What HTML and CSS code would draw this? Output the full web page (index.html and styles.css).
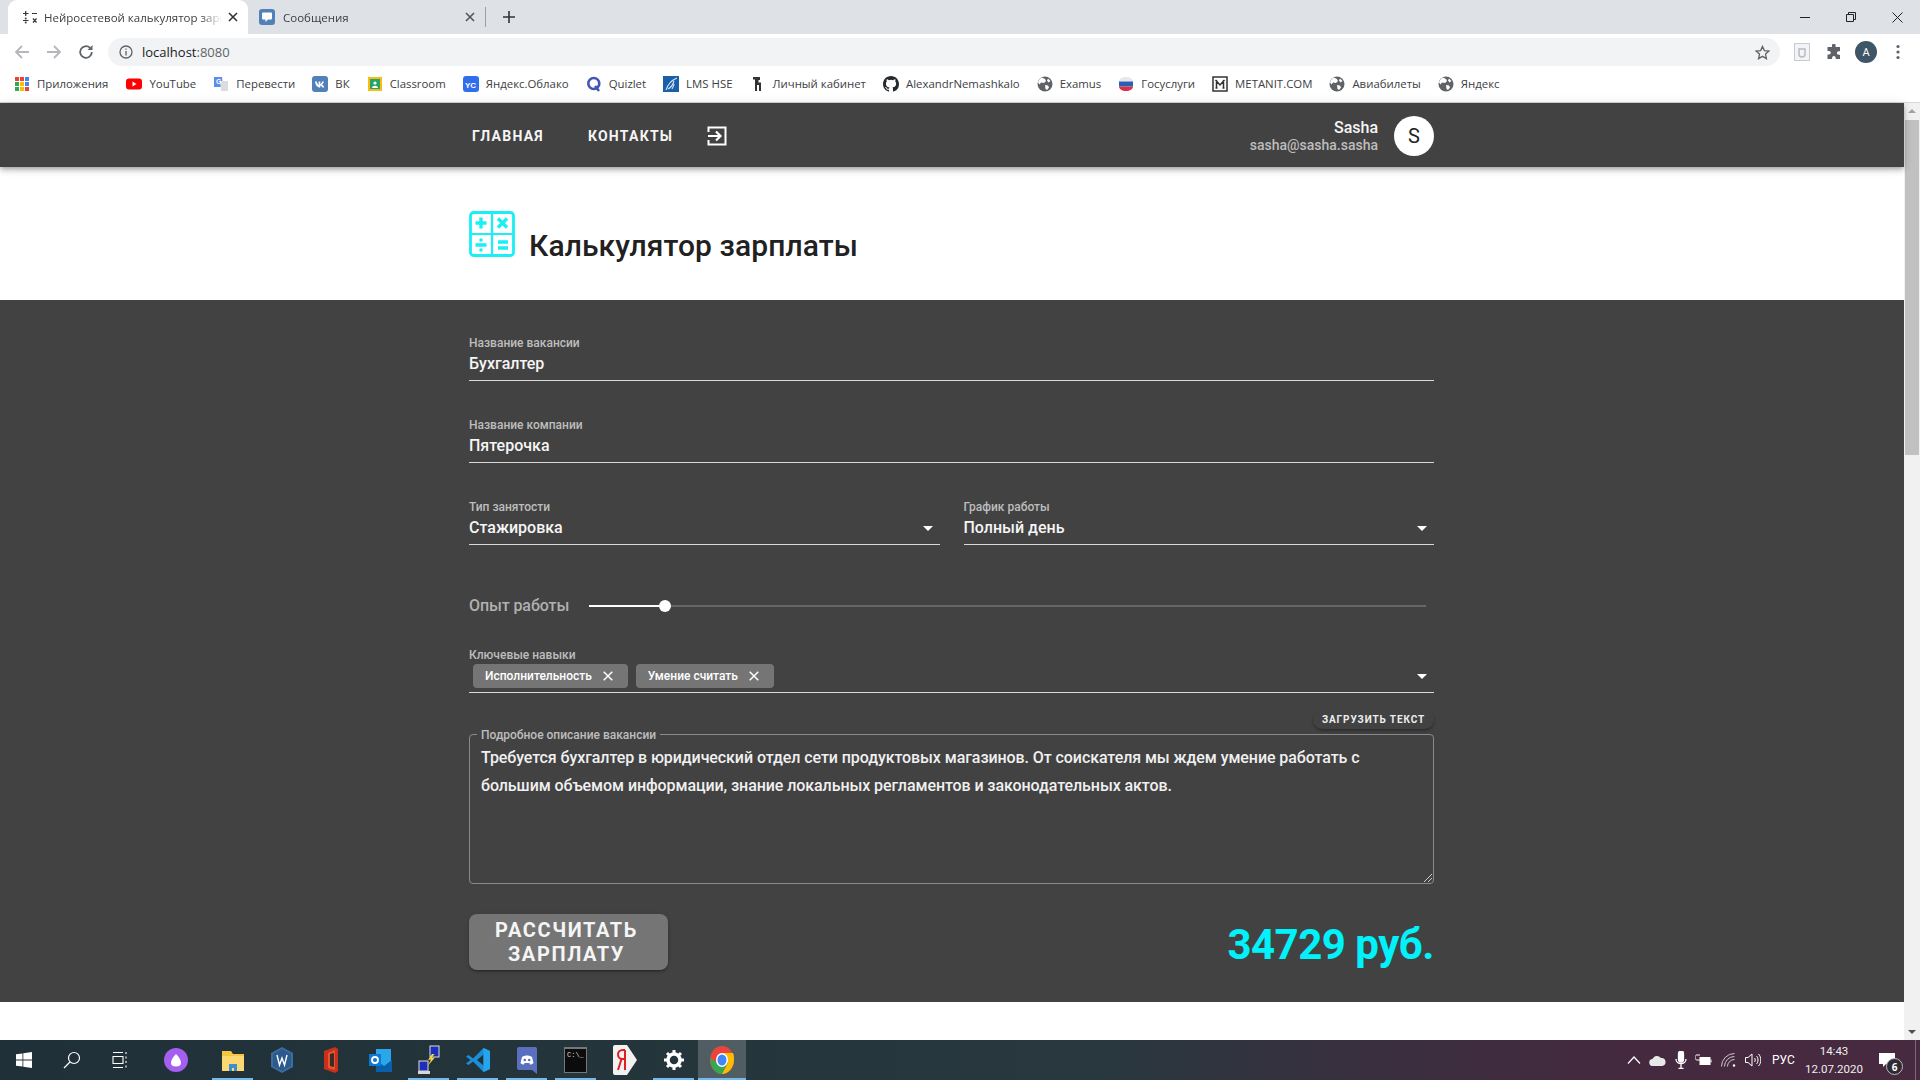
FILE: index.html
```html
<!DOCTYPE html>
<html lang="ru">
<head>
<meta charset="utf-8">
<title>Нейросетевой калькулятор зарплаты</title>
<link rel="stylesheet" href="styles.css">
</head>
<body>
<svg class="defs" width="0" height="0">
  <symbol id="globe" viewBox="0 0 16 16"><circle cx="8" cy="8" r="7.5" fill="#5f6368"/><path d="M5 1.5l3 1.5 1 2-2 2-3-.5-1.5 2-1.5-2C1.500 4 3 2.500 5 1.500zM8 9l3 .5 1 2-2 2.500-1.500-1zM11 2.500l2.500 2.500-2 1.500-1.500-2z" fill="#fff"/></symbol>
</svg>
<div class="tabstrip">
  <div class="tab tab-active">
    <svg class="tab-fav" width="16" height="16" viewBox="0 0 16 16" stroke="#333" stroke-width="1.200" fill="none"><path d="M1 4.500h5.500M3.700 2v5M10 4.500h5M1 11.500h5.500M11 9.500l3.500 4M14.500 9.500l-3.500 4"/><circle cx="3.700" cy="9.500" r=".4"/><circle cx="3.700" cy="13.500" r=".4"/></svg>
    <span class="tab-title">Нейросетевой калькулятор зарплаты</span>
    <svg class="tab-x" width="10" height="10" viewBox="0 0 10 10" stroke="#333" stroke-width="1.600"><path d="M1 1l8 8M9 1l-8 8"/></svg>
  </div>
  <div class="tab tab-other">
    <svg class="tab-fav" width="16" height="16" viewBox="0 0 16 16"><rect width="16" height="16" rx="3" fill="#5181b8"/><path d="M4 3.500h8a1 1 0 0 1 1 1v5a1 1 0 0 1-1 1H9l-2.500 2.500v-2.500H4a1 1 0 0 1-1-1v-5a1 1 0 0 1 1-1z" fill="#fff"/></svg>
    <span class="tab-title">Сообщения</span>
    <svg class="tab-x" width="10" height="10" viewBox="0 0 10 10" stroke="#555" stroke-width="1.600"><path d="M1 1l8 8M9 1l-8 8"/></svg>
  </div>
  <div class="tab-sep"></div>
  <svg class="tab-new" width="12" height="12" viewBox="0 0 12 12" stroke="#333" stroke-width="1.600"><path d="M6 0v12M0 6h12"/></svg>
  <div class="winctl">
    <svg width="10" height="10" viewBox="0 0 10 10" stroke="#222"><path d="M0 5.500h10"/></svg>
    <svg width="10" height="10" viewBox="0 0 10 10" stroke="#222" fill="none"><path d="M.500 2.500h7v7h-7zM2.500 2.500v-2h7v7h-2"/></svg>
    <svg width="11" height="11" viewBox="0 0 11 11" stroke="#222"><path d="M.500.500l10 10M10.500.500l-10 10"/></svg>
  </div>
</div>
<div class="toolbar">
  <svg class="nav-ic" width="16" height="16" viewBox="0 0 16 16" stroke="#b4b7bb" stroke-width="1.800" fill="none"><path d="M15 8H2M8 2L2 8l6 6"/></svg>
  <svg class="nav-ic" width="16" height="16" viewBox="0 0 16 16" stroke="#b4b7bb" stroke-width="1.800" fill="none"><path d="M1 8h13M8 2l6 6-6 6"/></svg>
  <svg class="nav-ic" width="16" height="16" viewBox="0 0 16 16" stroke="#5f6368" stroke-width="1.800" fill="none"><path d="M13.800 8A5.800 5.800 0 1 1 12 3.800"/><path d="M14.500 1v5h-5z" fill="#5f6368" stroke="none"/></svg>
  <div class="omnibox">
    <svg width="14" height="14" viewBox="0 0 14 14" fill="none" stroke="#5f6368" stroke-width="1.300"><circle cx="7" cy="7" r="6"/><path d="M7 6v4.500M7 3.500v1.300"/></svg>
    <span class="url">localhost<span class="url-dim">:8080</span></span>
    <svg class="star" width="15" height="15" viewBox="0 0 16 16" fill="none" stroke="#5f6368" stroke-width="1.400"><path d="M8 1.500l2 4.500 4.800.5-3.600 3.200 1 4.800L8 12.100l-4.200 2.400 1-4.800L1.200 6.500 6 6z"/></svg>
  </div>
  <div class="tool-right">
    <svg width="16" height="18" viewBox="0 0 16 18"><rect x=".5" y=".5" width="15" height="17" fill="#f3f4f6" stroke="#c8cbd0"/><path d="M5 6h6v5a3 3 0 0 1-6 0z" fill="none" stroke="#b6bcc4" stroke-width="1.500"/></svg>
    <svg width="16" height="16" viewBox="0 0 16 16"><path d="M6 1.500a1.800 1.800 0 0 1 3.600 0V3H14v4.200h-1.300a1.800 1.800 0 0 0 0 3.600H14V15H9.700v-1.300a1.800 1.800 0 0 0-3.600 0V15H1.500v-4.500H3a1.800 1.800 0 0 0 0-3.600H1.500V3H6z" fill="#5f6368"/></svg>
    <span class="profile">A</span>
    <svg class="dots" width="4" height="16" viewBox="0 0 4 16" fill="#5f6368"><circle cx="2" cy="2.500" r="1.600"/><circle cx="2" cy="8" r="1.600"/><circle cx="2" cy="13.500" r="1.600"/></svg>
  </div>
</div>
<div class="bookmarks">
  <a class="bm bm-apps"><svg class="bm-ic" width="16" height="16" viewBox="0 0 16 16"><g fill="#ea4335"><rect x="1" y="1" width="4" height="4"/><rect x="6" y="1" width="4" height="4"/></g><rect x="11" y="1" width="4" height="4" fill="#4285f4"/><rect x="1" y="6" width="4" height="4" fill="#34a853"/><rect x="6" y="6" width="4" height="4" fill="#fbbc04"/><rect x="11" y="6" width="4" height="4" fill="#4285f4"/><rect x="1" y="11" width="4" height="4" fill="#34a853"/><rect x="6" y="11" width="4" height="4" fill="#fbbc04"/><rect x="11" y="11" width="4" height="4" fill="#ea4335"/></svg>Приложения</a>
  <a class="bm"><svg class="bm-ic" width="16" height="16" viewBox="0 0 16 16"><rect y="2.500" width="16" height="11" rx="3" fill="#f00"/><path d="M6.500 5.500l4 2.500-4 2.500z" fill="#fff"/></svg>YouTube</a>
  <a class="bm"><svg class="bm-ic" width="16" height="16" viewBox="0 0 16 16"><path d="M1 1h8l1 10H1z" fill="#5b8def"/><path d="M7 5h8v10H8z" fill="#d9dce1"/><text class="bm-g" x="3" y="8">G</text></svg>Перевести</a>
  <a class="bm"><svg class="bm-ic" width="16" height="16" viewBox="0 0 16 16"><rect width="16" height="16" rx="3" fill="#5181b8"/><path d="M3 5.500h1.800c.4 2 1.200 3 1.800 3.200V5.500h1.700v2.600c.8-.2 1.500-1.200 1.900-2.600h1.700c-.3 1.500-1.200 2.600-1.900 3.100.7.400 1.700 1.300 2.200 2.900h-1.800c-.4-1.200-1.200-1.900-2.100-2.100v2.100h-.4C5.500 11.500 3.400 9.300 3 5.500z" fill="#fff"/></svg>ВК</a>
  <a class="bm"><svg class="bm-ic" width="16" height="16" viewBox="0 0 16 16"><rect x="1" y="1" width="14" height="14" fill="#f9bc15"/><rect x="3" y="3" width="10" height="10" fill="#25a667"/><circle cx="8" cy="7" r="1.600" fill="#fff"/><path d="M5 12c0-3 6-3 6 0z" fill="#fff"/></svg>Classroom</a>
  <a class="bm"><svg class="bm-ic" width="16" height="16" viewBox="0 0 16 16"><rect width="16" height="16" rx="3" fill="#2f6fed"/><text class="bm-yc" x="2" y="11.500">YC</text></svg>Яндекс.Облако</a>
  <a class="bm"><svg class="bm-ic" width="16" height="16" viewBox="0 0 16 16" fill="none" stroke="#4257b2" stroke-width="2.600"><circle cx="7.800" cy="7.500" r="5.500"/><path d="M9 10l4 5"/></svg>Quizlet</a>
  <a class="bm bm-lms"><svg class="bm-ic" width="16" height="16" viewBox="0 0 16 16"><rect width="16" height="16" fill="#1a5fa8"/><path d="M3 14C5 8 9 4 14 2M5 13c2-1 5-4 6-8M9 13c1-2 2-3 2-5" stroke="#cfe3f6" stroke-width="1.100" fill="none"/></svg>LMS HSE</a>
  <a class="bm"><svg class="bm-ic" width="16" height="16" viewBox="0 0 16 16"><path d="M4 1h7v3H9.500v2.500H12V15h-2V9H8v6H6V3.500H4z" fill="#333"/></svg>Личный кабинет</a>
  <a class="bm bm-gh"><svg class="bm-ic" width="16" height="16" viewBox="0 0 16 16"><path fill="#24292e" d="M8 0C3.580 0 0 3.580 0 8c0 3.540 2.290 6.530 5.470 7.590.4.070.55-.17.55-.38 0-.19-.01-.82-.01-1.490-2.010.37-2.530-.49-2.690-.94-.09-.23-.48-.94-.82-1.130-.28-.15-.68-.52-.01-.53.63-.01 1.080.58 1.230.82.720 1.210 1.870.870 2.330.660.070-.520.280-.870.510-1.070-1.780-.2-3.640-.890-3.640-3.950 0-.870.310-1.590.820-2.150-.080-.2-.360-1.020.080-2.120 0 0 .670-.210 2.200.820a7.420 7.420 0 0 1 4 0c1.530-1.040 2.200-.820 2.200-.820.440 1.100.160 1.920.080 2.120.510.560.820 1.270.820 2.150 0 3.070-1.870 3.750-3.650 3.950.290.250.540.730.540 1.480 0 1.070-.010 1.930-.010 2.200 0 .210.150.460.550.380A8.010 8.010 0 0 0 16 8c0-4.420-3.580-8-8-8z"/></svg>AlexandrNemashkalo</a>
  <a class="bm"><svg class="bm-ic" width="16" height="16"><use href="#globe"/></svg>Examus</a>
  <a class="bm"><svg class="bm-ic" width="16" height="16" viewBox="0 0 16 16"><path d="M1 5.500C1 3 4 1 8 1s7 2 7 4.500z" fill="#e8e8ec"/><rect x="1" y="5.500" width="14" height="5" fill="#2a5fb8"/><path d="M1 10.500h14C15 13 12 15 8 15s-7-2-7-4.500z" fill="#d8304a"/></svg>Госуслуги</a>
  <a class="bm"><svg class="bm-ic" width="16" height="16" viewBox="0 0 16 16" fill="none" stroke="#333" stroke-width="1.500"><rect x="1" y="1" width="14" height="14"/><path d="M3.500 4l4.500 5 4.500-5M4.500 4v8M11.500 4v8M3.500 12h2M10.500 12h2"/></svg>METANIT.COM</a>
  <a class="bm"><svg class="bm-ic" width="16" height="16"><use href="#globe"/></svg>Авиабилеты</a>
  <a class="bm"><svg class="bm-ic" width="16" height="16"><use href="#globe"/></svg>Яндекс</a>
</div>
<div class="viewport">
  <div class="page">
    <header class="appbar">
      <nav class="nav">
        <a class="nav-link">Главная</a>
        <a class="nav-link">Контакты</a>
        <svg class="nav-login" width="20" height="20" viewBox="0 0 20 20" fill="none" stroke="#fff" stroke-width="2"><path d="M1.500 6V1.500h17v17h-17V14"/><path d="M1 10h12M9 5.500l4.500 4.500L9 14.500" stroke-width="2.200"/></svg>
      </nav>
      <div class="user">
        <div class="user-text">
          <div class="user-name">Sasha</div>
          <div class="user-mail">sasha@sasha.sasha</div>
        </div>
        <div class="avatar">S</div>
      </div>
    </header>
    <section class="hero">
      <svg class="calc-ic" width="46" height="46" viewBox="0 0 46 46" fill="none" stroke="#19f0f5" stroke-width="2.800"><rect x="1.500" y="1.500" width="43" height="43" rx="3"/><path d="M23 1.500v43M1.500 23h43" stroke-width="2.200"/><g stroke-width="3.400"><path d="M12 6.500v11M6.500 12h11M29 7.500l9 9M38 7.500l-9 9M29 31h10M29 37h10M6.500 34h11"/></g><circle cx="12" cy="29" r="1.800" fill="#19f0f5" stroke="none"/><circle cx="12" cy="39" r="1.800" fill="#19f0f5" stroke="none"/></svg>
      <h1 class="title">Калькулятор зарплаты</h1>
    </section>
    <main class="form">
      <div class="field">
        <div class="label">Название вакансии</div>
        <div class="value">Бухгалтер</div>
      </div>
      <div class="field field-next">
        <div class="label">Название компании</div>
        <div class="value">Пятерочка</div>
      </div>
      <div class="two field-next">
        <div class="field field-select">
          <div class="label">Тип занятости</div>
          <div class="value value-row">Стажировка<span class="caret"></span></div>
        </div>
        <div class="field field-select">
          <div class="label">График работы</div>
          <div class="value value-row">Полный день<span class="caret"></span></div>
        </div>
      </div>
      <div class="slider">
        <span class="slider-label">Опыт работы</span>
        <div class="track"><div class="track-on"></div><div class="thumb"></div></div>
      </div>
      <div class="skills">
        <div class="label">Ключевые навыки</div>
        <div class="chips">
          <span class="chip">Исполнительность<svg class="chip-x" width="10" height="10" viewBox="0 0 10 10" stroke="#fff" stroke-width="1.500"><path d="M.7.700l8.600 8.600M9.300.700L.7 9.300"/></svg></span>
          <span class="chip">Умение считать<svg class="chip-x" width="10" height="10" viewBox="0 0 10 10" stroke="#fff" stroke-width="1.500"><path d="M.7.700l8.600 8.600M9.300.700L.7 9.300"/></svg></span>
          <span class="caret caret-end"></span>
        </div>
      </div>
      <div class="load-row"><button class="load">Загрузить текст</button></div>
      <div class="desc">
        <span class="legend">Подробное описание вакансии</span>
        <p class="desc-text">Требуется бухгалтер в юридический отдел сети продуктовых магазинов. От соискателя мы ждем умение работать с большим объемом информации, знание локальных регламентов и законодательных актов.</p>
        <svg class="grip" width="9" height="9" viewBox="0 0 9 9" stroke="#ccc"><path d="M1 9l8-8M5 9l4-4"/></svg>
      </div>
      <div class="result-row">
        <button class="calc-btn">Рассчитать зарплату</button>
        <div class="result">34729 руб.</div>
      </div>
    </main>
  </div>
  <div class="scrollbar">
    <span class="sb-up"></span>
    <div class="sb-thumb"></div>
    <span class="sb-down"></span>
  </div>
</div>
<footer class="taskbar">
  <div class="tb tb-sys"><svg width="16" height="16" viewBox="0 0 16 16" fill="#fff"><path d="M0 2.300l6.500-.9v6.200H0zM7.300 1.300L16 0v7.600H7.300zM0 8.400h6.500v6.200L0 13.700zM7.300 8.400H16V16l-8.700-1.300z"/></svg></div>
  <div class="tb tb-sys"><svg width="18" height="18" viewBox="0 0 18 18" fill="none" stroke="#fff" stroke-width="1.200"><circle cx="11" cy="7" r="5.500"/><path d="M7 11l-6 6"/></svg></div>
  <div class="tb tb-sys"><svg width="16" height="18" viewBox="0 0 16 18" fill="none" stroke="#fff" stroke-width="1.100"><path d="M1 1.500h10M1 16.500h10M1 5.500h10v7H1zM14 1v2M14 5.500v2M14 10v2M14 14.500v2"/></svg></div>
  <div class="tb tb-alice"><svg width="24" height="24" viewBox="0 0 24 24"><circle cx="12" cy="12" r="12" fill="#a45ff0"/><path d="M12 6c-3 3-5 6-5 9 0 2.500 2 3.500 5 3.500s5-1 5-3.500c0-3-2-6-5-9z" fill="#fff"/></svg></div>
  <div class="tb tb-on tb-first"><svg width="24" height="24" viewBox="0 0 24 24"><path d="M1 3h9l2 3h11v17H1z" fill="#f5c640"/><path d="M1 8h22v15H1z" fill="#fcd970"/><path d="M8 23v-7h8v7h-3v-3h-2v3z" fill="#3a8fd0"/></svg></div>
  <div class="tb"><svg width="24" height="26" viewBox="0 0 24 26"><path d="M12 0l11 6v14l-11 6-11-6V6z" fill="#3d6d9e"/><path d="M12 2l9 5v12l-9 5-9-5V7z" fill="#2b5a8c"/><path d="M7 8l2.500 10L12 11l2.500 7L17 8" stroke="#fff" stroke-width="1.400" fill="none"/></svg></div>
  <div class="tb"><svg width="18" height="26" viewBox="0 0 18 26"><path d="M2 4l11-4 3 2v22l-3 2-11-4z" fill="#c8301e"/><path d="M6 6l7-3v20l-7-2z" fill="#e3572a"/><path d="M8 7l4-1v14l-4-1z" fill="#3a2a2a"/></svg></div>
  <div class="tb"><svg width="24" height="24" viewBox="0 0 24 24"><path d="M8 1h15v17H8z" fill="#28a8ea"/><path d="M8 12l8 6 8-6v12H8z" fill="#0a5fab"/><rect x="1" y="6" width="12" height="12" fill="#0f78d4"/><circle cx="7" cy="12" r="3" fill="none" stroke="#fff" stroke-width="1.800"/></svg></div>
  <div class="tb tb-on"><svg width="26" height="30" viewBox="0 0 26 30"><rect x="14" y="1" width="9" height="11" fill="#1d2fb8" stroke="#ddd"/><rect x="3" y="16" width="9" height="10" fill="#1d2fb8" stroke="#ddd"/><path d="M2 26h12v3H2z" fill="#d8d8d8"/><path d="M16 9l-4 6 3-.5-3 6 7-8-3.500.5 3-4z" fill="#f7d93a"/></svg></div>
  <div class="tb tb-on"><svg width="24" height="24" viewBox="0 0 24 24"><path d="M17.500 0L24 3v18l-6.500 3L7 13.500 2.500 17 0 15.500 4.500 12 0 8.500 2.500 7 7 10.500z" fill="#1c8ed6"/><path d="M17.500 6.500L11 12l6.500 5.500z" fill="#233038"/><path d="M17.500 0L24 3v18l-6.500 3z" fill="#26a5ee"/></svg></div>
  <div class="tb tb-on"><svg width="20" height="28" viewBox="0 0 20 28"><path d="M2 1h16a2 2 0 0 1 2 2v25l-5-4H2a2 2 0 0 1-2-2V3a2 2 0 0 1 2-2z" fill="#5a6fc0"/><path d="M5 11c3-2 7-2 10 0l1.500 6c-1 1-2.500 1.500-3.500 1.500l-.5-1.500h-5L7 18.500c-1 0-2.500-.5-3.500-1.500z" fill="#fff"/><circle cx="7.800" cy="14" r="1.300" fill="#5a6fc0"/><circle cx="12.200" cy="14" r="1.300" fill="#5a6fc0"/></svg></div>
  <div class="tb tb-on tb-cmd"><span class="cmd">C:\_</span></div>
  <div class="tb"><svg width="24" height="30" viewBox="0 0 24 30"><path d="M2 0h12l10 15-10 15H2a2 2 0 0 1-2-2V2a2 2 0 0 1 2-2z" fill="#f2f2f2"/><path d="M12 5v20M12 5H9.500a4 4 0 0 0 0 9H12M8.500 14L5 25" fill="none" stroke="#e02020" stroke-width="2"/></svg></div>
  <div class="tb tb-on"><svg width="20" height="20" viewBox="0 0 20 20"><circle cx="10" cy="10" r="6" fill="none" stroke="#fff" stroke-width="3.500"/><path d="M10 0v4M10 16v4M0 10h4M16 10h4M3 3l2.800 2.800M14.200 14.200L17 17M17 3l-2.800 2.800M5.800 14.200L3 17" stroke="#fff" stroke-width="3"/></svg></div>
  <div class="tb tb-on tb-active"><svg width="26" height="30" viewBox="0 0 26 30"><ellipse cx="13" cy="15" rx="12" ry="14" fill="#e8453c"/><path d="M1.200 13C1 22 6 29 13 29l6-11H9z" fill="#34a853"/><path d="M13 8h11c1 2 1 4 1 7 0 8-6 14-12 14l6-11z" fill="#fbbc05"/><ellipse cx="13" cy="15" rx="6" ry="7" fill="#fff"/><ellipse cx="13" cy="15" rx="4.500" ry="5.500" fill="#4285f4"/></svg></div>
  <div class="tray">
    <svg width="14" height="8" viewBox="0 0 14 8" fill="none" stroke="#fff" stroke-width="1.200"><path d="M1 7.500L7 1l6 6.500"/></svg>
    <svg width="17" height="11" viewBox="0 0 17 11" fill="#e8e8e8"><path d="M4 11a3.500 3.500 0 0 1-.5-7A5 5 0 0 1 12 3a4 4 0 0 1 1 8z"/></svg>
    <svg width="12" height="18" viewBox="0 0 12 18" fill="none" stroke="#fff" stroke-width="1.300"><rect x="3.500" y="0" width="5" height="11" rx="2.500" fill="#fff"/><path d="M1 8c0 6 10 6 10 0M6 13v4M3.500 17.500h5"/></svg>
    <svg width="17" height="13" viewBox="0 0 17 13" fill="none" stroke="#fff"><rect x="5" y="3.500" width="10" height="7" fill="#fff"/><path d="M16 5.500v3M0 1v3c0 1 1 2 2 2h3M2 0v2M4 0v2"/></svg>
    <svg width="16" height="14" viewBox="0 0 16 14" fill="none" stroke="#ccc"><path d="M.5 13.500A13 13 0 0 1 13.500.5M3.500 13.500A10 10 0 0 1 13.500 3.500M6.500 13.500a7 7 0 0 1 7-7"/><circle cx="13" cy="12.500" r="1.200" fill="#fff" stroke="none"/></svg>
    <svg width="16" height="14" viewBox="0 0 16 14" fill="none" stroke="#fff"><path d="M.5 4.500h2.500L7 1v12L3 9.500H.5zM9.500 5c1 1 1 3 0 4M11.500 3c2 2 2 6 0 8M13.500 1c3 3 3 9 0 12"/></svg>
    <span class="lang">РУС</span>
    <div class="clock"><div>14:43</div><div>12.07.2020</div></div>
    <div class="notif">
      <svg width="16" height="14" viewBox="0 0 16 14" fill="#fff"><path d="M0 0h16v11H7L4 14v-3H0z"/></svg>
      <span class="notif-badge">6</span>
    </div>
    <div class="desktop-edge"></div>
  </div>
</footer>
</body>
</html>
```
FILE: styles.css
```css
* { box-sizing: border-box; }
html, body { margin: 0; padding: 0; }
body {
  width: 1920px; height: 1080px; overflow: hidden;
  display: flex; flex-direction: column;
  font-family: Roboto, "Liberation Sans", sans-serif;
  background: #fff;
}
.defs { position: absolute; }

/* browser chrome */
.tabstrip {
  height: 34px; flex: none; display: flex; align-items: stretch;
  background: #dee1e6; padding-left: 8px;
  font-family: "Open Sans", "Liberation Sans", sans-serif; font-size: 11.5px; color: #3c4043;
}
.tab { display: flex; align-items: center; width: 240px; padding: 0 10px 0 14px; }
.tab-active { background: #fff; border-radius: 9px 9px 0 0; }
.tab-other { margin-left: -1px; padding-left: 12px; width: 238px; padding-right: 10px; }
.tab-fav { flex: none; margin-right: 6px; }
.tab-other .tab-fav { margin-right: 8px; }
.tab-title {
  flex: 1; white-space: nowrap; overflow: hidden; min-width: 0;
  -webkit-mask-image: linear-gradient(to right, #000 88%, transparent 100%);
  mask-image: linear-gradient(to right, #000 88%, transparent 100%);
}
.tab-x { flex: none; margin-left: 6px; }
.tab-sep { width: 1px; height: 20px; background: #9aa0a6; align-self: center; }
.tab-new { align-self: center; margin-left: 17px; }
.winctl { margin-left: auto; display: flex; align-items: center; gap: 36px; padding-right: 17px; }

.toolbar { height: 36px; flex: none; display: flex; align-items: center; background: #fff; padding: 0 14px; gap: 16px; }
.nav-ic { flex: none; }
.omnibox {
  width: 1672px; height: 28px; background: #f1f3f4; border-radius: 14px; margin-left: -2px;
  display: flex; align-items: center; padding: 0 10px 0 11px; gap: 9px;
  font-family: "Open Sans", "Liberation Sans", sans-serif; font-size: 13px; color: #202124;
}
.url-dim { color: #5f6368; }
.star { margin-left: auto; }
.tool-right { display: flex; align-items: center; gap: 16px; margin-left: -2px; }
.profile {
  width: 22px; height: 22px; border-radius: 50%; background: #3f5666; color: #fff; margin-left: -3px;
  font-size: 11px; display: flex; align-items: center; justify-content: center;
}
.dots { margin-left: 3px; }

.bookmarks {
  height: 33px; flex: none; display: flex; align-items: center; background: #fff;
  border-bottom: 1px solid #d6d8dc; padding: 0 0 5px 14px;
  font-family: "Open Sans", "Liberation Sans", sans-serif; font-size: 11.4px; color: #3c4043;
}
.bm { display: flex; align-items: center; margin-right: 17px; white-space: nowrap; }
.bm-apps { margin-right: 18px; }
.bm-ic { margin-right: 7px; flex: none; }
.bm-g { font: bold 7px "Liberation Sans", sans-serif; fill: #fff; }
.bm-yc { font: bold 8px "Liberation Sans", sans-serif; fill: #fff; }

/* page */
.viewport { flex: 1; min-height: 0; display: flex; }
.page { flex: 1; min-width: 0; display: flex; flex-direction: column; background: #fff; }
.appbar {
  height: 64px; flex: none; background: #424242; color: #fff;
  padding: 2px 470px 0 469px; display: flex; align-items: center; justify-content: space-between;
  box-shadow: 0 2px 4px -1px rgba(0,0,0,.2), 0 4px 5px rgba(0,0,0,.14), 0 1px 10px rgba(0,0,0,.12);
  position: relative;
}
.nav { display: flex; align-items: center; }
.nav-link {
  font-size: 14px; font-weight: 700; letter-spacing: 1.250px; text-transform: uppercase;
  margin: 0 44px 0 3px; color: #f5f5f5;
}
.nav-link + .nav-link { margin: 0 34px 0 0; }
.nav-login { display: block; }
.user { display: flex; align-items: center; gap: 16px; }
.user-text { text-align: right; }
.user-name { font-size: 16px; font-weight: 500; line-height: 19px; color: #f5f5f5; }
.user-mail { font-size: 14px; line-height: 17px; font-weight: 500; color: #bdbdbd; }
.avatar {
  width: 40px; height: 40px; border-radius: 50%; background: #fff; color: #222;
  font-size: 20px; display: flex; align-items: center; justify-content: center;
}
.hero { height: 133px; flex: none; padding: 44px 0 0 469px; display: flex; align-items: flex-start; gap: 14px; }
.calc-ic { flex: none; }
.title { margin: 17px 0 0; font-size: 30px; font-weight: 500; line-height: 36px; letter-spacing: .1px; color: #212121; }

.form {
  flex: none; background: #424242; padding: 36px 470px 32px 469px; color: #fff;
  height: 702px;
}
.field { border-bottom: 1px solid #d8d8d8; padding-bottom: 6px; height: 45px; }
.field-next { margin-top: 37px; }
.label { font-size: 12px; line-height: 14px; font-weight: 500; color: #bdbdbd; }
.value { margin-top: 4px; font-size: 16px; line-height: 20px; font-weight: 500; color: #f5f5f5; }
.value-row { display: flex; align-items: center; justify-content: space-between; }
.two { display: flex; gap: 24px; }
.field-select { flex: 1; min-width: 0; }
.caret {
  width: 0; height: 0; border-left: 5px solid transparent; border-right: 5px solid transparent;
  border-top: 5px solid #fff; margin-right: 7px; margin-top: 1px;
}
.slider { margin-top: 51px; height: 20px; display: flex; align-items: center; }
.slider-label { font-size: 16px; font-weight: 500; color: #b0b0b0; width: 120px; flex: none; letter-spacing: -.1px; padding-bottom: 2px; }
.track { width: 837px; height: 2px; background: #666; position: relative; }
.track-on { width: 76px; height: 2px; background: #fff; }
.thumb { position: absolute; left: 70px; top: -5px; width: 12px; height: 12px; border-radius: 50%; background: #fff; }
.skills { margin-top: 31px; border-bottom: 1px solid #d8d8d8; height: 46px; padding-top: 1px; }
.chips { display: flex; align-items: center; gap: 8px; margin-top: 2px; padding-left: 4px; }
.chip {
  height: 24px; background: #757575; border-radius: 4px; color: #fff;
  display: flex; align-items: center; padding: 0 15px 0 12px; gap: 11px;
  font-size: 12px; font-weight: 500;
}
.chip-x { flex: none; }
.caret-end { margin-left: auto; margin-top: 0; }
.load-row { margin-top: 17px; display: flex; justify-content: flex-end; height: 19px; }
.load {
  border: 0; background: #424242; color: #eee; height: 19px; width: 121px; padding: 0; border-radius: 10px;
  font: 700 10px Roboto, sans-serif; letter-spacing: .9px; text-transform: uppercase;
  box-shadow: 0 2px 3px rgba(0,0,0,.3);
}
.desc {
  margin-top: 5px; height: 150px; border: 1px solid #8a8a8a; border-radius: 4px; padding: 9px 12px 0 11px;
  position: relative;
}
.legend {
  position: absolute; left: 7px; top: -7px; padding: 0 4px; background: #424242;
  font-size: 12px; line-height: 14px; font-weight: 500; color: #bdbdbd;
}
.desc-text { margin: 0; font-size: 16px; line-height: 28px; font-weight: 500; letter-spacing: -.08px; color: #f0f0f0; }
.grip { position: absolute; right: 1px; bottom: 1px; }
.result-row { margin-top: 30px; display: flex; justify-content: space-between; align-items: center; }
.calc-btn {
  width: 199px; height: 56px; border: 0; border-radius: 8px; background: #757575; color: #f5f5f5; padding: 0 20px 0 16px;
  font: 700 20px/24px Roboto, sans-serif; letter-spacing: 1.600px; text-transform: uppercase;
  box-shadow: 0 3px 1px -2px rgba(0,0,0,.2), 0 2px 2px rgba(0,0,0,.14), 0 1px 5px rgba(0,0,0,.12);
}
.result { font-size: 42px; font-weight: 700; line-height: 50px; letter-spacing: -.5px; color: #00f2fa; margin: 6px 0 0 0; }

.scrollbar { width: 16px; flex: none; background: #f1f1f1; display: flex; flex-direction: column; align-items: center; }
.sb-up, .sb-down { width: 0; height: 0; border-left: 4px solid transparent; border-right: 4px solid transparent; flex: none; }
.sb-up { border-bottom: 4px solid #a3a3a3; margin: 6px 0 7px; }
.sb-thumb { width: 14px; height: 335px; background: #c1c1c1; flex: none; }
.sb-down { border-top: 4px solid #505050; margin-top: auto; margin-bottom: 6px; }

/* taskbar */
.taskbar {
  height: 40px; flex: none; display: flex; align-items: stretch;
  background: linear-gradient(to right, #1f3038 0%, #28383e 57%, #38303e 70%, #45293f 85%, #472a40 100%);
  color: #fff; font-family: "Open Sans", "Liberation Sans", sans-serif;
}
.tb { width: 49px; flex: none; display: flex; align-items: center; justify-content: center; position: relative; }
.tb-sys { width: 48px; }
.tb-alice { margin-left: 8px; width: 48px; }
.tb-first { margin-left: 8px; }
.tb-on::after { content: ""; position: absolute; left: 4px; right: 4px; bottom: 0; height: 2px; background: #76b9ed; }
.tb-active { background: rgba(255,255,255,.2); width: 48px; }
.tb-active::after { left: 0; right: 0; }
.cmd {
  width: 23px; height: 26px; background: #0c0c0c; border: 1px solid #777; border-top-width: 2px;
  font: 7px "Liberation Mono", monospace; color: #ddd; padding: 2px 0 0 2px; display: block;
}
.tray { margin-left: auto; display: flex; align-items: center; }
.tray svg { display: block; margin-right: 8.5px; }
.lang { font-size: 12px; margin: 0 5px 0 2.5px; width: 22px; white-space: nowrap; font-family: Roboto, sans-serif; }
.clock { font-size: 11.5px; line-height: 18px; text-align: center; width: 70px; color: #eee; font-family: Roboto, sans-serif; }
.notif { position: relative; width: 46px; height: 40px; display: flex; align-items: center; justify-content: center; }
.notif svg { margin-right: 10px; }
.notif-badge {
  position: absolute; left: 17px; top: 18px; width: 17px; height: 17px; border-radius: 50%;
  background: #2e2a33; border: 1px solid #bbb; font-size: 10px; font-weight: 700;
  display: flex; align-items: center; justify-content: center;
}
.desktop-edge { width: 1px; height: 40px; background: #7a6a78; margin-right: 4px; }
```
